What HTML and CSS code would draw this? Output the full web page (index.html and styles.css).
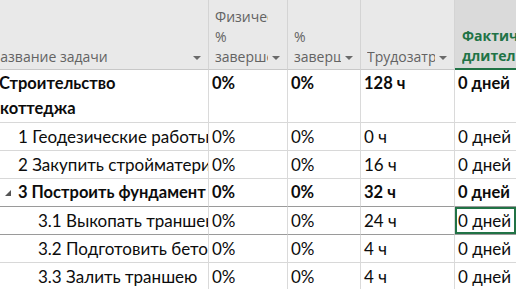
FILE: index.html
```html
<!DOCTYPE html>
<html lang="ru">
<head>
<meta charset="utf-8">
<link rel="stylesheet" href="styles.css">
</head>
<body>
<div class="sheet">
  <div class="row head">
    <div class="hc hfirst">
      <div class="htext"><div class="ln first">Название задачи</div></div>
      <span class="arrow"></span>
    </div>
    <div class="hc">
      <div class="htext"><div class="ln">Физический</div><div class="ln">%</div><div class="ln">завершения</div></div>
      <span class="arrow"></span>
    </div>
    <div class="hc">
      <div class="htext"><div class="ln">%</div><div class="ln">завершения</div></div>
      <span class="arrow"></span>
    </div>
    <div class="hc">
      <div class="htext"><div class="ln">Трудозатраты</div></div>
      <span class="arrow"></span>
    </div>
    <div class="hc active">
      <div class="htext"><div class="ln">Фактическая</div><div class="ln">длительность</div></div>
    </div>
  </div>

  <div class="row bold tall">
    <div class="cell name lvl0 wrap">Строительство<br>коттеджа</div>
    <div class="cell">0%</div>
    <div class="cell">0%</div>
    <div class="cell">128 ч</div>
    <div class="cell">0 дней</div>
  </div>

  <div class="row">
    <div class="cell name lvl1">1 Геодезические работы</div>
    <div class="cell">0%</div>
    <div class="cell">0%</div>
    <div class="cell">0 ч</div>
    <div class="cell">0 дней</div>
  </div>

  <div class="row">
    <div class="cell name lvl1">2 Закупить стройматериалы</div>
    <div class="cell">0%</div>
    <div class="cell">0%</div>
    <div class="cell">16 ч</div>
    <div class="cell">0 дней</div>
  </div>

  <div class="row bold pre-sel">
    <div class="cell name lvl1"><svg class="tri" width="6" height="6" viewBox="0 0 6 6"><polygon points="6,0 6,6 0,6"/></svg>3 Построить фундамент</div>
    <div class="cell">0%</div>
    <div class="cell">0%</div>
    <div class="cell">32 ч</div>
    <div class="cell">0 дней</div>
  </div>

  <div class="row sel">
    <div class="cell name lvl2">3.1 Выкопать траншею</div>
    <div class="cell">0%</div>
    <div class="cell">0%</div>
    <div class="cell">24 ч</div>
    <div class="cell focus">0 дней</div>
  </div>

  <div class="row">
    <div class="cell name lvl2">3.2 Подготовить бетон</div>
    <div class="cell">0%</div>
    <div class="cell">0%</div>
    <div class="cell">4 ч</div>
    <div class="cell">0 дней</div>
  </div>

  <div class="row">
    <div class="cell name lvl2">3.3 Залить траншею</div>
    <div class="cell">0%</div>
    <div class="cell">0%</div>
    <div class="cell">4 ч</div>
    <div class="cell">0 дней</div>
  </div>
</div>
</body>
</html>
```

FILE: styles.css
```css
html, body {
  margin: 0;
  padding: 0;
  background: #ffffff;
}
body {
  width: 516px;
  height: 289px;
  overflow: hidden;
}
.sheet {
  width: 516px;
  overflow: hidden;
}
.row {
  display: grid;
  grid-template-columns: 209px 79px 73px 94px 61px;
}
.head {
  background: #e9e9e9;
  height: 70px;
  font-family: "Open Sans", "Noto Sans", sans-serif;
  font-size: 14px;
  color: #636363;
}
.hc {
  display: flex;
  align-items: flex-end;
  border-right: 1px solid #d4d4d4;
  border-bottom: 1px solid #c8c8c8;
  padding: 0 0 2px 6px;
  box-sizing: border-box;
  min-width: 0;
}
.hc.hfirst {
  padding-left: 0;
}
.htext {
  flex: 1;
  min-width: 0;
  overflow: hidden;
  line-height: 20px;
}
.ln {
  white-space: nowrap;
  overflow: hidden;
}
.ln.first {
  margin-left: -10px;
}
.arrow {
  flex: none;
  width: 0;
  height: 0;
  border-left: 4px solid transparent;
  border-right: 4px solid transparent;
  border-top: 4px solid #6a6a6a;
  margin: 0 7px 7px 4px;
}
.hc.active {
  background: #dadada;
  color: #217346;
  font-weight: bold;
  border-right: none;
  border-bottom: 2px solid #217346;
  padding-left: 7px;
}
.cell {
  font-family: "Lato", "Liberation Sans", sans-serif;
  font-size: 17px;
  line-height: 25px;
  color: #0c0c0c;
  padding: 1px 0 1px 3px;
  height: 25px;
  border-right: 1px solid #dadada;
  border-bottom: 1px solid #d8d8d8;
  white-space: nowrap;
  overflow: hidden;
  min-width: 0;
}
.row .cell:last-child {
  border-right: none;
}
.tall .cell {
  height: 50px;
}
.bold .cell {
  font-weight: bold;
  font-size: 16.5px;
}
.name {
  display: flex;
  align-items: flex-start;
}
.lvl0 {
  display: block;
  padding-left: 0;
  text-indent: -1px;
}
.wrap {
  white-space: normal;
}
.lvl1 {
  padding-left: 18px;
}
.lvl2 {
  padding-left: 38px;
}
.tri {
  fill: #555;
  margin: 10px 7px 0 -13px;
  flex: none;
}
.pre-sel .cell {
  border-bottom-color: #9a9a9a;
}
.sel .cell {
  border-bottom-color: #9a9a9a;
}
.focus {
  box-shadow: inset 0 0 0 2px #217346;
  border-bottom-color: #217346;
}
```
